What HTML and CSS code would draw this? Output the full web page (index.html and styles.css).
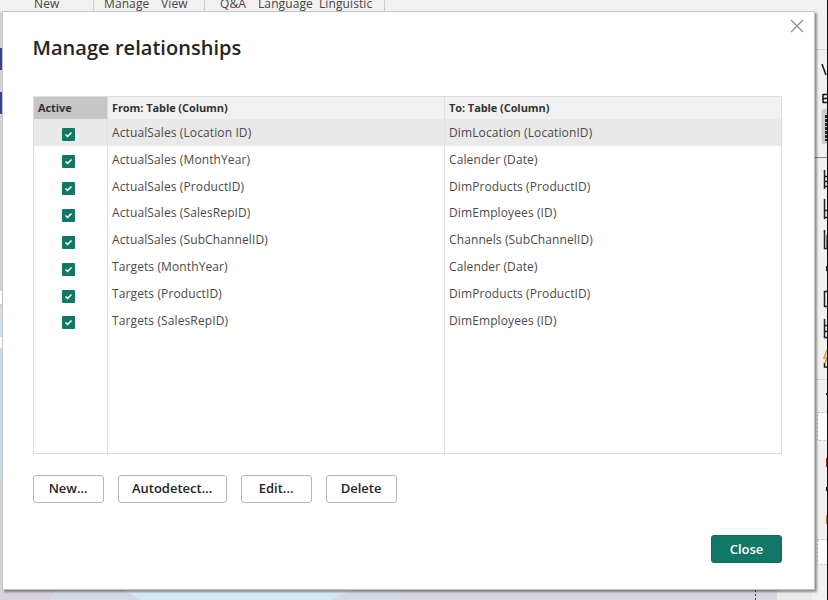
FILE: index.html
```
<!DOCTYPE html>
<html lang="en">
<head>
<meta charset="utf-8">
<title>Manage relationships</title>
<link rel="stylesheet" href="styles.css">
</head>
<body>
<svg class="backdrop" width="828" height="600" viewBox="0 0 828 600" aria-hidden="true">
  <rect width="828" height="600" fill="#d5d9e4"/>
  <rect width="828" height="12" fill="#f2f1f0"/>
  <path d="M93.500 0V11M204.500 0V11M384.500 0V11" stroke="#cfcfcf"/>
  <rect y="12" width="3" height="588" fill="#d2d2d6"/>
  <path d="M0 48h2v22H0zM0 92h2v22H0z" fill="#37409b"/>
  <path d="M0 309h2v40H0z" fill="#cbe0ea"/>
  <path d="M0 291h2v13H0zM0 337h2v11H0z" fill="#fff"/>
  <path d="M0 348h2v130H0z" fill="#c8dce8"/>
  <path d="M124 590H352L331 600H141z" fill="#d2eaf0"/>
  <path d="M0 590H55L50 600H0z" fill="#d5d2dc"/>
  <rect x="400" y="590" width="377" height="10" fill="#d5d5dc"/>
  <path d="M755.5 590V600" stroke="#444" stroke-dasharray="2 2"/>
  <rect x="777" y="590" width="36" height="10" fill="#eaeaea"/>
  <rect x="812" y="12" width="15" height="588" fill="#f2f1f0"/>
  <path d="M815 49.5H827M815 379.5H827" stroke="#d5d5d5"/>
  <path d="M815 157.500H827" stroke="#888"/>
  <path d="M822 64l4 11M823 94v9M823 94.500h4M823 98.500h4M823 102.500h4" fill="none" stroke="#111" stroke-width="1.500"/>
  <rect x="821.500" y="109" width="8" height="35" rx="2" fill="#cdcdcd"/>
  <path d="M826 115V141" stroke="#222" stroke-width="2" stroke-dasharray="3 1"/>
  <path d="M824.500 170V189M824 176.500h3M824 181.500h3M824 186.500h3M824.500 199V219M824 210.500h3M824 217.500h3M824.500 230V249M824 248.500h3M827 291.500h-2.500v15h2.500M824.500 319V338M824 325.500h3M824 331.500h3M824 337.500h3M824.500 363v4h3" fill="none" stroke="#222" stroke-width="1.500"/>
  <path d="M826 235h1v13h-1z" fill="#777"/>
  <path d="M826 266h1v5h-1zM826 393h1v2h-1zM826 487h1v4h-1z" fill="#222"/>
  <path d="M827 350l-3 8h3l-2 5" fill="none" stroke="#e4962e" stroke-width="1.500"/>
  <path d="M817.500 412.500h12v28h-12zM817.500 539.500h12v25h-12z" fill="#fff" stroke="#bdbdbd" stroke-dasharray="2 2"/>
  <path d="M826 458h1v9h-1z" fill="#963d20"/>
  <path d="M826 515h1v9h-1z" fill="#c9822c"/>
  <rect x="827" width="1" height="600" fill="#0c0c0c"/>
</svg>
<div class="ribbon">
  <span class="g-new">New</span>
  <span class="g-manage">Manage</span>
  <span class="g-view">View</span>
  <span class="g-qa">Q&amp;A</span>
  <span class="g-lang">Language</span>
  <span>Linguistic</span>
</div>
<main class="dialog">
  <svg class="dismiss" width="14" height="14" viewBox="0 0 14 14"><path d="M1 1L13 13M13 1L1 13" fill="none" stroke="#8c8c8c" stroke-width="1.200"/></svg>
  <h1>Manage relationships</h1>
  <div class="table">
    <div class="row head"><div class="c-active"><span>Active</span></div><div><span>From: Table (Column)</span></div><div><span>To: Table (Column)</span></div></div>
    <div class="row selected"><div><i class="check"><svg width="13" height="13" viewBox="0 0 13 13"><path d="M3.500 6.500L5.600 8.400L9.500 4.500"/></svg></i></div><div>ActualSales (Location ID)</div><div>DimLocation (LocationID)</div></div>
    <div class="row"><div><i class="check"><svg width="13" height="13" viewBox="0 0 13 13"><path d="M3.500 6.500L5.600 8.400L9.500 4.500"/></svg></i></div><div>ActualSales (MonthYear)</div><div>Calender (Date)</div></div>
    <div class="row"><div><i class="check"><svg width="13" height="13" viewBox="0 0 13 13"><path d="M3.500 6.500L5.600 8.400L9.500 4.500"/></svg></i></div><div>ActualSales (ProductID)</div><div>DimProducts (ProductID)</div></div>
    <div class="row"><div><i class="check"><svg width="13" height="13" viewBox="0 0 13 13"><path d="M3.500 6.500L5.600 8.400L9.500 4.500"/></svg></i></div><div>ActualSales (SalesRepID)</div><div>DimEmployees (ID)</div></div>
    <div class="row"><div><i class="check"><svg width="13" height="13" viewBox="0 0 13 13"><path d="M3.500 6.500L5.600 8.400L9.500 4.500"/></svg></i></div><div>ActualSales (SubChannelID)</div><div>Channels (SubChannelID)</div></div>
    <div class="row"><div><i class="check"><svg width="13" height="13" viewBox="0 0 13 13"><path d="M3.500 6.500L5.600 8.400L9.500 4.500"/></svg></i></div><div>Targets (MonthYear)</div><div>Calender (Date)</div></div>
    <div class="row"><div><i class="check"><svg width="13" height="13" viewBox="0 0 13 13"><path d="M3.500 6.500L5.600 8.400L9.500 4.500"/></svg></i></div><div>Targets (ProductID)</div><div>DimProducts (ProductID)</div></div>
    <div class="row"><div><i class="check"><svg width="13" height="13" viewBox="0 0 13 13"><path d="M3.500 6.500L5.600 8.400L9.500 4.500"/></svg></i></div><div>Targets (SalesRepID)</div><div>DimEmployees (ID)</div></div>
    <div class="row filler"><div></div><div></div><div></div></div>
  </div>
  <div class="actions">
    <button>New...</button>
    <button class="wide">Autodetect...</button>
    <button>Edit...</button>
    <button>Delete</button>
  </div>
  <div class="footer"><button class="primary">Close</button></div>
</main>
</body>
</html>
```

FILE: styles.css
```
* { box-sizing: border-box; }
body {
  margin: 0;
  width: 828px;
  height: 600px;
  overflow: hidden;
  position: relative;
  font-family: "Open Sans", "Noto Sans", sans-serif;
  color: #252423;
}
.backdrop { position: absolute; inset: 0; }
.ribbon {
  position: relative;
  display: flex;
  height: 12px;
  padding-left: 34px;
  overflow: hidden;
  font-size: 12px;
  line-height: 16px;
  letter-spacing: 0.1px;
  color: #444;
  white-space: nowrap;
}
.ribbon span { margin-top: -4px; }
.g-new { width: 70px; }
.g-manage { width: 57px; }
.g-view { width: 59px; }
.g-qa { width: 38px; }
.g-lang { width: 61px; }
.dialog {
  position: absolute;
  left: 2px;
  top: 11px;
  width: 813px;
  height: 579px;
  padding: 22px 32px 0 30px;
  background: #fff;
  border: 1px solid #c4c4c4;
  box-shadow: 2px 2px 2px rgba(0, 0, 0, 0.4);
}
.dismiss { position: absolute; right: 10px; top: 7px; }
h1 {
  margin: 0;
  height: 62px;
  font-size: 20px;
  line-height: 28px;
  font-weight: 600;
  letter-spacing: 0.04px;
  text-indent: -0.5px;
}
.table {
  display: flex;
  flex-direction: column;
  width: 749px;
  height: 358px;
  border: 1px solid #dedede;
}
.row {
  display: grid;
  grid-template-columns: 73px 337px 1fr;
  flex: 0 0 26.900px;
  font-size: 12px;
  line-height: 26px;
  letter-spacing: 0.110px;
  color: #4a4a4a;
}
.row > div { border-left: 1px solid #e0e0e0; padding: 0.800px 0 0 4px; white-space: nowrap; }
.row > div:first-child { border-left: 0; }
.head {
  flex-basis: 22px;
  background: #f1f1f1;
  font-size: 11px;
  line-height: 22px;
  letter-spacing: -0.080px;
  font-weight: 700;
  color: #333;
}
.row.head > div { padding-top: 0; }
.head .c-active { background: #c6c6c6; }
.selected { background: #e9e9e9; }
.filler { flex: 1; }
.check {
  display: block;
  width: 13px;
  height: 13px;
  margin: 8.400px 0 0 24.400px;
  border-radius: 1px;
  background: #117865;
}
.check svg { display: block; fill: none; stroke: #fff; stroke-width: 1.500; }
.actions { display: flex; gap: 14px; margin: 21px 0 0 -0.400px; }
button {
  width: 71px;
  height: 28px;
  padding: 0 0 2px;
  border: 1px solid #b8b8b8;
  border-radius: 3px;
  background: #fff;
  font: 600 13px/24px "Open Sans", sans-serif;
  color: #252423;
}
.wide { width: 109px; }
.footer { display: flex; justify-content: flex-end; margin-top: 32px; }
.primary { background: #117865; border-color: #0f6d5c; color: #fff; padding: 0; }
```
